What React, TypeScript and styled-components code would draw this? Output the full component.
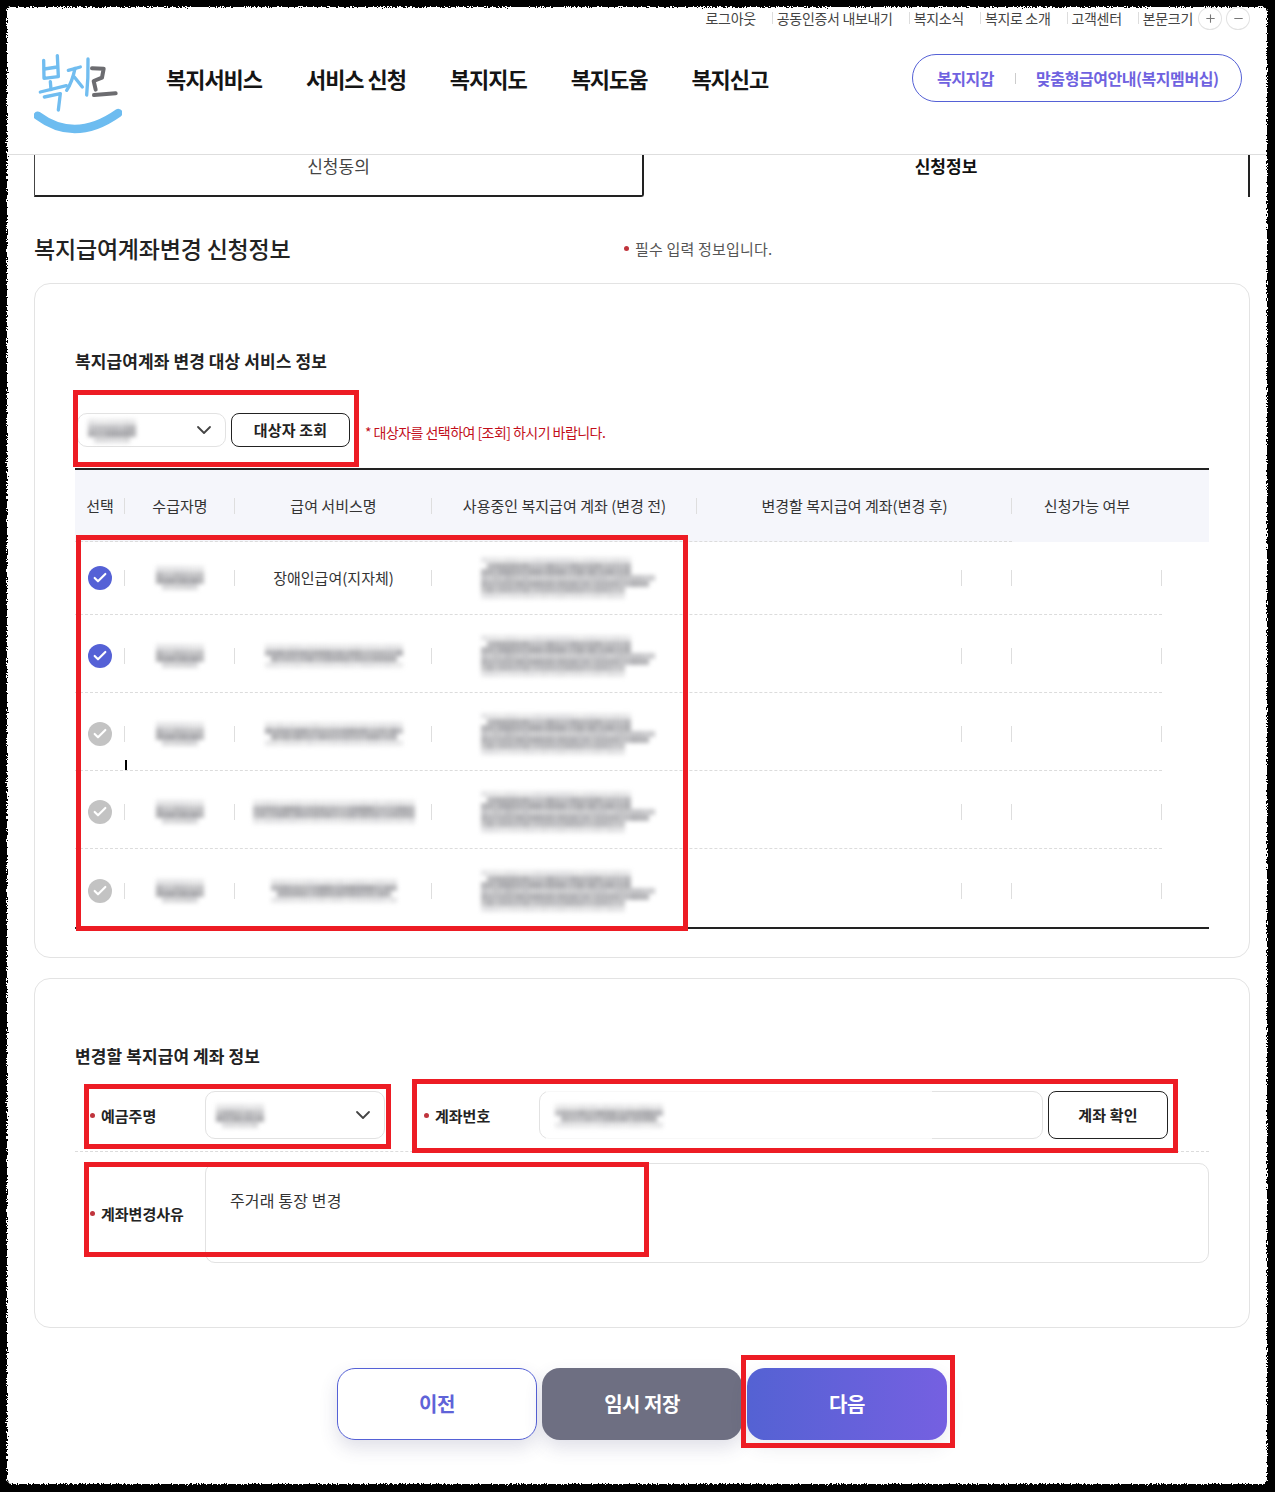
import React from "react";
import styled, { createGlobalStyle } from "styled-components";
import { ChevronDown, Check, Plus, Minus } from "lucide-react";

const Global = createGlobalStyle`
  html, body { margin: 0; padding: 0; background: #000; }
  body { font-family: "Noto Sans CJK KR", "Noto Sans", sans-serif; color: #222; }
  * { box-sizing: border-box; }
`;

const Page = styled.div`
  position: relative;
  width: 1275px;
  height: 1492px;
  background: #fff;
  overflow: hidden;
`;
const Header = styled.header`
  height: 155px;
  border-bottom: 1px solid #dedede;
`;
const UtilBar = styled.div`
  height: 36px;
  padding-right: 25px;
  display: flex;
  justify-content: flex-end;
  align-items: center;
`;
const UtilLink = styled.a<{ $sep?: boolean }>`
  position: relative;
  font-size: 14px;
  letter-spacing: -0.32px;
  line-height: 20px;
  color: #444;
  margin-left: ${(p) => (p.$sep ? 21 : 0)}px;
  &::before {
    content: "";
    display: ${(p) => (p.$sep ? "block" : "none")};
    position: absolute;
    left: -5px;
    top: 4px;
    height: 12px;
    width: 1px;
    background: #ddd;
  }
`;
const SizeBtn = styled.span<{ $gap: number }>`
  width: 24px;
  height: 23px;
  margin-left: ${(p) => p.$gap}px;
  border: 1px solid #e2e2e2;
  border-radius: 50%;
  display: flex;
  align-items: center;
  justify-content: center;
  color: #777;
`;
const MainBar = styled.div`
  display: flex;
  align-items: flex-start;
  padding: 18px 33px 0 34px;
`;
const LogoSvg = styled.svg`
  width: 88px;
  height: 80px;
  flex: none;
`;
const Nav = styled.nav`
  display: flex;
  gap: 44px;
  margin: 9px 0 0 44px;
`;
const NavItem = styled.a`
  font-size: 22px;
  line-height: 30px;
  font-weight: 700;
  letter-spacing: -1.05px;
  color: #151515;
  white-space: nowrap;
`;
const Pill = styled.div`
  margin-left: auto;
  width: 330px;
  height: 48px;
  border: 1.5px solid #5561d6;
  border-radius: 24px;
  display: flex;
  align-items: center;
  padding-left: 24px;
  color: #6f62e0;
  font-size: 16px;
  font-weight: 700;
  letter-spacing: -0.45px;
`;
const PillSep = styled.span`
  width: 1px;
  height: 11px;
  background: #ccc;
  margin: 0 20px 0 21px;
`;
const Main = styled.main`
  padding: 0 25px 0 34px;
`;
const Tabs = styled.div`
  display: grid;
  grid-template-columns: 610px 606px;
  height: 42px;
`;
const Tab = styled.div<{ $active?: boolean }>`
  text-align: center;
  font-size: 17px;
  line-height: 22px;
  font-weight: ${(p) => (p.$active ? 700 : 400)};
  color: ${(p) => (p.$active ? "#111" : "#444")};
  border-left: ${(p) => (p.$active ? "none" : "1px solid #444")};
  border-right: 2px solid #222;
  border-bottom: ${(p) => (p.$active ? "none" : "2px solid #222")};
  border-bottom-right-radius: ${(p) => (p.$active ? 0 : 3)}px;
`;
const TitleRow = styled.div`
  display: grid;
  grid-template-columns: 590px 1fr;
  align-items: center;
  height: 28px;
  margin: 37px 0 21px;
`;
const Heading = styled.h2`
  margin: 0;
  font-size: 23px;
  line-height: 28px;
  font-weight: 500;
  letter-spacing: -0.2px;
  color: #222;
`;
const Dot = styled.i`
  display: inline-block;
  width: 5px;
  height: 5px;
  border-radius: 50%;
  background: #c0343c;
  flex: none;
`;
const Note = styled.div`
  display: flex;
  align-items: center;
  gap: 6px;
  font-size: 15px;
  letter-spacing: 0.2px;
  color: #555;
`;
const Card = styled.section<{ $bottom: number }>`
  border: 1px solid #e3e3e3;
  border-radius: 16px;
  padding: 65px 40px ${(p) => p.$bottom}px;
  margin-bottom: 20px;
`;
const CardTitle = styled.h3`
  margin: 0;
  font-size: 17px;
  line-height: 24px;
  font-weight: 700;
  color: #222;
  letter-spacing: 0.1px;
`;
const ToolRow = styled.div`
  display: flex;
  align-items: center;
  margin: 40px 0 21px 2px;
  height: 34px;
`;
const Select = styled.div<{ $w: number; $h: number }>`
  width: ${(p) => p.$w}px;
  height: ${(p) => p.$h}px;
  flex: none;
  border: 1px solid #e2e2e2;
  border-radius: 10px;
  display: flex;
  align-items: center;
  justify-content: space-between;
  padding: 0 9px 0 10px;
  color: #444;
`;
const OutlineBtn = styled.button<{ $w: number; $h: number }>`
  width: ${(p) => p.$w}px;
  height: ${(p) => p.$h}px;
  flex: none;
  margin-left: 5px;
  border: 1px solid #222;
  border-radius: 8px;
  background: #fff;
  font-family: inherit;
  font-size: 15px;
  font-weight: 700;
  letter-spacing: 0.15px;
  color: #222;
  padding: 0 0 1px;
`;
const Hint = styled.span`
  margin-left: 15px;
  margin-top: 4px;
  font-size: 14px;
  letter-spacing: -0.55px;
  color: #c20e1a;
`;
const Table = styled.div`
  border-top: 2px solid #222;
  border-bottom: 2px solid #222;
`;
const HeadRow = styled.div`
  position: relative;
  display: grid;
  grid-template-columns: 50px 110px 197px 265px 315px 150px;
  height: 72px;
  background: #f5f6fb;
  align-items: center;
  &::after {
    content: "";
    position: absolute;
    left: 0;
    bottom: 0;
    width: 937px;
    border-bottom: 1px dashed #dcdcdc;
  }
`;
const Cell = styled.div<{ $sep?: boolean }>`
  position: relative;
  display: flex;
  align-items: center;
  justify-content: center;
  height: 16px;
  padding-bottom: 2px;
  font-size: 15px;
  letter-spacing: 0.02px;
  color: #333;
  white-space: nowrap;
  &::after {
    content: "";
    display: ${(p) => (p.$sep ? "block" : "none")};
    position: absolute;
    right: 0;
    top: 0;
    bottom: 0;
    width: 1px;
    background: #dedede;
  }
`;
const BodyRow = styled.div<{ $h: number; $top: number; $line?: boolean }>`
  display: grid;
  grid-template-columns: 50px 110px 197px 265px 265px 50px 150px;
  width: 1087px;
  height: ${(p) => p.$h}px;
  padding-top: ${(p) => p.$top}px;
  align-items: center;
  border-bottom: ${(p) => (p.$line ? "1px dashed #dcdcdc" : "none")};
`;
const CheckMark = styled.span<{ $on?: boolean }>`
  width: 24px;
  height: 24px;
  margin-top: 2px;
  border-radius: 50%;
  background: ${(p) => (p.$on ? "#5561d6" : "#c3c3c3")};
  color: #fff;
  display: flex;
  align-items: center;
  justify-content: center;
`;
const MosaicSvg = styled.svg`
  display: block;
  flex: none;
  margin-top: 2px;
  overflow: visible;
  filter: blur(2px);
`;
const FormRow = styled.div`
  display: flex;
  align-items: center;
  height: 61px;
  padding-bottom: 12px;
  margin-top: 23px;
  border-bottom: 1px dashed #dcdcdc;
`;
const Label = styled.label<{ $w: number; $left: number }>`
  width: ${(p) => p.$w}px;
  flex: none;
  padding-left: ${(p) => p.$left}px;
  display: flex;
  align-items: center;
  gap: 6px;
  font-size: 15px;
  font-weight: 700;
  letter-spacing: 0;
  color: #222;
`;
const AccountInput = styled.div`
  position: relative;
  width: 504px;
  height: 48px;
  flex: none;
  border: 1px solid #e2e2e2;
  border-radius: 10px;
  display: flex;
  align-items: center;
  padding-left: 15px;
  &::after {
    content: "";
    position: absolute;
    left: 6px;
    right: 110px;
    top: -2px;
    bottom: -2px;
    background: rgba(255, 255, 255, 0.75);
    z-index: 0;
  }
  & > * {
    position: relative;
    z-index: 1;
  }
`;
const ReasonRow = styled.div`
  display: flex;
  align-items: center;
  margin-top: 11px;
`;
const ReasonBox = styled.div`
  flex: 1;
  height: 100px;
  border: 1px solid #e2e2e2;
  border-radius: 10px;
  padding: 24px 24px;
  font-size: 16px;
  line-height: 24px;
  color: #333;
  letter-spacing: 0.15px;
`;
const Actions = styled.div`
  display: flex;
  justify-content: center;
  gap: 5px;
  margin-top: 40px;
`;
const ActionBtn = styled.button<{ $kind: "line" | "gray" | "main" }>`
  width: 200px;
  height: 72px;
  border-radius: 18px;
  font-family: inherit;
  font-size: 20px;
  font-weight: 700;
  letter-spacing: -0.5px;
  padding: 0 0 2px;
  border: ${(p) => (p.$kind === "line" ? "1px solid #5561d6" : "none")};
  color: ${(p) => (p.$kind === "line" ? "#5f63d8" : "#fff")};
  background: ${(p) =>
    p.$kind === "line"
      ? "#fff"
      : p.$kind === "gray"
      ? "#6e6f82"
      : "linear-gradient(90deg, #5462d3, #7560e1)"};
  box-shadow: 0 8px 18px rgba(60, 65, 110, ${(p) => (p.$kind === "main" ? 0.1 : 0.16)});
`;
const RedBox = styled.div<{ $x: number; $y: number; $w: number; $h: number }>`
  position: absolute;
  left: ${(p) => p.$x}px;
  top: ${(p) => p.$y}px;
  width: ${(p) => p.$w}px;
  height: ${(p) => p.$h}px;
  border: 5px solid #ed1c24;
  pointer-events: none;
`;
const Caret = styled.i`
  position: absolute;
  left: 125px;
  top: 760px;
  width: 2px;
  height: 10px;
  background: #000;
`;
const EdgeSvg = styled.svg`
  position: absolute;
  left: 0;
  top: 0;
  width: 1275px;
  height: 1492px;
  pointer-events: none;
`;

type Band = [number, number, number];
const Mosaic = ({ w, h, seed, bands, cell = 6 }: { w: number; h: number; seed: number; bands: Band[]; cell?: number }) => {
  const rects: React.ReactNode[] = [];
  const cols = Math.ceil(w / cell);
  bands.forEach(([a, from, to], r) => {
    for (let c = 0; c < cols; c++) {
      const f = (c + 0.5) / cols;
      if (f < from || f > to) continue;
      const n = Math.abs(Math.sin((c + 1) * 12.9898 + (r + 1) * 78.233 + seed) * 43758.5453) % 1;
      rects.push(
        <rect
          key={`${r}-${c}`}
          x={c * cell}
          y={r * cell}
          width={cell}
          height={cell}
          fill="#a2a2a6"
          opacity={Math.min(0.95, a * (0.85 + n * 0.3))}
        />
      );
    }
  });
  return (
    <MosaicSvg width={w} height={h} viewBox={`0 0 ${w} ${h}`} shapeRendering="crispEdges">
      {rects}
    </MosaicSvg>
  );
};

const nameBands: Band[] = [
  [0.25, 0.05, 0.95],
  [0.7, 0.02, 0.98],
  [0.85, 0.02, 0.98],
  [0.4, 0.1, 0.9],
];
const NameBlur = () => <Mosaic w={48} h={24} seed={3} bands={nameBands} />;
const serviceBands: Band[] = [
  [0.25, 0.02, 0.98],
  [0.8, 0.02, 0.98],
  [0.75, 0.03, 0.97],
  [0.25, 0.02, 0.98],
];
const ServiceBlur = ({ w, seed }: { w: number; seed: number }) => <Mosaic w={w} h={24} seed={seed} bands={serviceBands} />;
const accountBands: Band[] = [
  [0.25, 0.05, 0.88],
  [0.75, 0.06, 0.88],
  [0.8, 0.05, 0.88],
  [0.6, 0.04, 1],
  [0.75, 0.02, 0.95],
  [0.7, 0.02, 0.82],
  [0.28, 0.02, 0.82],
];
const AccountBlur = () => <Mosaic w={180} h={42} seed={7} bands={accountBands} />;

const Logo = () => (
  <LogoSvg viewBox="27 27 264 240" fill="none" strokeLinecap="round" strokeLinejoin="round">
    <g stroke="#71bdf0" strokeWidth="10">
      <path d="M56 46 L57 100 L100 95 L97 32" />
      <path d="M58 72 L97 66" />
      <path d="M46 141 L124 122" />
      <path d="M76 110 L78 134" />
      <path d="M58 156 L106 146 L100 195" />
      <path d="M130 76 L166 66" />
      <path d="M150 70 Q142 110 125 136" />
      <path d="M148 96 L172 126" />
      <path d="M189 42 Q190 100 185 150" />
    </g>
    <g stroke="#6c6c70" strokeWidth="12">
      <path d="M201 70 L236 71 L231 98 L206 108 L212 134" />
      <path d="M207 150 L272 145" />
    </g>
    <path d="M38 212 Q150 296 280 204" stroke="#6dbcf0" strokeWidth="25" />
  </LogoSvg>
);

const utilLinks = ["공동인증서 내보내기", "복지소식", "복지로 소개", "고객센터", "본문크기"];

const rows = [
  { on: true, h: 73, top: 0, service: null as null | { w: number; seed: number } },
  { on: true, h: 78, top: 5, service: { w: 138, seed: 11 } },
  { on: false, h: 78, top: 5, service: { w: 138, seed: 21 } },
  { on: false, h: 78, top: 5, service: { w: 174, seed: 31 } },
  { on: false, h: 78, top: 5, service: { w: 126, seed: 41 } },
];

export default function App() {
  return (
    <Page>
      <Global />
      <Header>
        <UtilBar>
          <UtilLink>로그아웃</UtilLink>
          {utilLinks.map((t) => (
            <UtilLink key={t} $sep>
              {t}
            </UtilLink>
          ))}
          <SizeBtn $gap={5}>
            <Plus size={13} strokeWidth={2} />
          </SizeBtn>
          <SizeBtn $gap={4}>
            <Minus size={13} strokeWidth={2} />
          </SizeBtn>
        </UtilBar>
        <MainBar>
          <Logo />
          <Nav>
            <NavItem>복지서비스</NavItem>
            <NavItem>서비스 신청</NavItem>
            <NavItem>복지지도</NavItem>
            <NavItem>복지도움</NavItem>
            <NavItem>복지신고</NavItem>
          </Nav>
          <Pill>
            <span>복지지갑</span>
            <PillSep />
            <span>맞춤형급여안내(복지멤버십)</span>
          </Pill>
        </MainBar>
      </Header>
      <Main>
        <Tabs>
          <Tab>신청동의</Tab>
          <Tab $active>신청정보</Tab>
        </Tabs>
        <TitleRow>
          <Heading>복지급여계좌변경 신청정보</Heading>
          <Note>
            <Dot />
            필수 입력 정보입니다.
          </Note>
        </TitleRow>
        <Card $bottom={28}>
          <CardTitle>복지급여계좌 변경 대상 서비스 정보</CardTitle>
          <ToolRow>
            <Select $w={149} $h={34}>
              <Mosaic w={48} h={24} seed={5} bands={nameBands} />
              <ChevronDown size={24} strokeWidth={1.8} />
            </Select>
            <OutlineBtn $w={119} $h={34}>대상자 조회</OutlineBtn>
            <Hint>* 대상자를 선택하여 [조회] 하시기 바랍니다.</Hint>
          </ToolRow>
          <Table>
            <HeadRow>
              <Cell $sep>선택</Cell>
              <Cell $sep>수급자명</Cell>
              <Cell $sep>급여 서비스명</Cell>
              <Cell $sep>사용중인 복지급여 계좌 (변경 전)</Cell>
              <Cell $sep>변경할 복지급여 계좌(변경 후)</Cell>
              <Cell>신청가능 여부</Cell>
            </HeadRow>
            {rows.map((r, i) => (
              <BodyRow key={i} $h={r.h} $top={r.top} $line={i < rows.length - 1}>
                <Cell $sep>
                  <CheckMark $on={r.on}>
                    <Check size={16} strokeWidth={3.2} />
                  </CheckMark>
                </Cell>
                <Cell $sep>
                  <NameBlur />
                </Cell>
                <Cell $sep>
                  {r.service ? <ServiceBlur w={r.service.w} seed={r.service.seed} /> : "장애인급여(지자체)"}
                </Cell>
                <Cell $sep={false}>
                  <AccountBlur />
                </Cell>
                <Cell $sep />
                <Cell $sep />
                <Cell $sep />
              </BodyRow>
            ))}
          </Table>
        </Card>
        <Card $bottom={64}>
          <CardTitle>변경할 복지급여 계좌 정보</CardTitle>
          <FormRow>
            <Label $w={130} $left={15}>
              <Dot />
              예금주명
            </Label>
            <Select $w={180} $h={48}>
              <Mosaic w={48} h={24} seed={9} bands={nameBands} />
              <ChevronDown size={24} strokeWidth={1.8} />
            </Select>
            <Label $w={154} $left={39}>
              <Dot />
              계좌번호
            </Label>
            <AccountInput>
              <Mosaic w={108} h={24} seed={13} bands={serviceBands} />
            </AccountInput>
            <OutlineBtn $w={120} $h={48}>계좌 확인</OutlineBtn>
          </FormRow>
          <ReasonRow>
            <Label $w={130} $left={15}>
              <Dot />
              계좌변경사유
            </Label>
            <ReasonBox>주거래 통장 변경</ReasonBox>
          </ReasonRow>
        </Card>
        <Actions>
          <ActionBtn $kind="line">이전</ActionBtn>
          <ActionBtn $kind="gray">임시 저장</ActionBtn>
          <ActionBtn $kind="main">다음</ActionBtn>
        </Actions>
      </Main>
      <Caret />
      <RedBox $x={73} $y={390} $w={286} $h={77} />
      <RedBox $x={76} $y={535} $w={612} $h={396} />
      <RedBox $x={84} $y={1084} $w={307} $h={65} />
      <RedBox $x={412} $y={1079} $w={766} $h={74} />
      <RedBox $x={84} $y={1162} $w={565} $h={95} />
      <RedBox $x={741} $y={1355} $w={214} $h={93} />
      <EdgeSvg viewBox="0 0 1275 1492">
        <defs>
          <filter id="torn" x="-2%" y="-2%" width="104%" height="104%">
            <feTurbulence type="fractalNoise" baseFrequency="0.8" numOctaves="2" seed="4" result="n" />
            <feDisplacementMap in="SourceGraphic" in2="n" scale="5" xChannelSelector="R" yChannelSelector="G" />
            <feGaussianBlur stdDeviation="0.4" />
          </filter>
        </defs>
        <path
          fillRule="evenodd"
          filter="url(#torn)"
          fill="#000"
          d="M-20 -20H1295V1512H-20Z M11 7H1262Q1267 7 1267 12V1479Q1267 1484 1262 1484H12Q7 1484 7 1479V11Q7 7 11 7Z"
        />
      </EdgeSvg>
    </Page>
  );
}
